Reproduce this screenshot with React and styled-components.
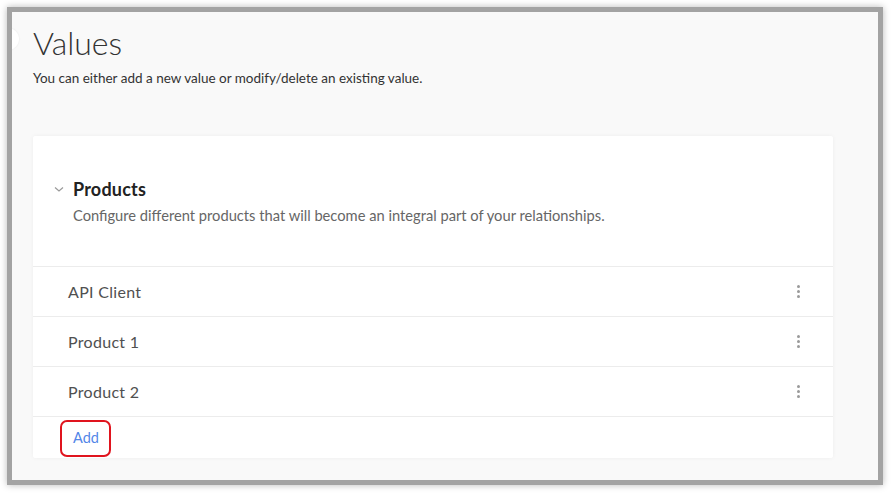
import React from 'react';
import styled, {createGlobalStyle} from 'styled-components';

const GlobalStyle = createGlobalStyle`
  html, body {
    margin: 0;
    padding: 0;
    background: #fff;
  }
  body {
    font-family: Lato, "Open Sans", "Liberation Sans", sans-serif;
  }
`;

const Page = styled.div`
  padding: 7px 8px 9px 7px;
  width: 891px;
  height: 494px;
  box-sizing: border-box;
`;

const Frame = styled.div`
  position: relative;
  overflow: hidden;
  box-sizing: border-box;
  width: 876px;
  height: 478px;
  border: 5px solid #a3a3a3;
  box-shadow: 0 0 7px rgba(0, 0, 0, 0.28);
  background: #f9f9f9;
  padding: 11px 45px 0 21px;
`;

const SideToggle = styled.span`
  position: absolute;
  left: -15px;
  top: 16px;
  width: 22px;
  height: 22px;
  border-radius: 50%;
  background: #fff;
  box-shadow: 0 0 2px rgba(0, 0, 0, 0.08);
`;

const Title = styled.h1`
  margin: 0;
  font-size: 32px;
  font-weight: 300;
  line-height: 40px;
  color: #333;
`;

const Subtitle = styled.p`
  margin: 6px 0 0;
  font-size: 13.5px;
  line-height: 18px;
  color: #333;
`;

const Card = styled.section`
  margin-top: 49px;
  width: 800px;
  background: #fff;
  border-radius: 2px;
  box-shadow: 0 0 4px rgba(0, 0, 0, 0.05);
`;

const CardHeader = styled.div`
  padding: 41px 20px 42px 20px;
  border-bottom: 1px solid #ececec;
`;

const HeaderLine = styled.div`
  display: flex;
  align-items: center;
  gap: 8px;
`;

const Chevron = styled.svg`
  width: 12px;
  height: 12px;
  flex-shrink: 0;
`;

const SectionTitle = styled.h2`
  margin: 0;
  font-size: 18px;
  font-weight: 700;
  letter-spacing: 0.2px;
  line-height: 24px;
  color: #222;
`;

const SectionText = styled.p`
  margin: 5px 0 0 20px;
  font-size: 14.7px;
  line-height: 18px;
  color: #666;
`;

const Row = styled.div`
  display: flex;
  align-items: center;
  justify-content: space-between;
  height: 49px;
  padding: 0 29px 0 35px;
  border-bottom: 1px solid #ececec;
  font-size: 16px;
  letter-spacing: 0.3px;
  color: #505050;
`;

const Kebab = styled.button`
  display: flex;
  flex-direction: column;
  align-items: center;
  gap: 2px;
  padding: 2px 4px;
  border: none;
  background: none;
  cursor: pointer;

  span {
    width: 3px;
    height: 3px;
    border-radius: 50%;
    background: #9a9a9a;
  }
`;

const AddRow = styled.div`
  display: flex;
  padding: 3px 0 1px 27px;
`;

const AddButton = styled.button`
  box-sizing: border-box;
  width: 51px;
  height: 37px;
  padding: 0 0 2px 11px;
  text-align: left;
  border: 2px solid #e0141e;
  border-radius: 7px;
  background: #fff;
  font-family: inherit;
  font-size: 14.5px;
  color: #5286e8;
  cursor: pointer;
`;

const products = ['API Client', 'Product 1', 'Product 2'];

function App() {
  return (
    <>
      <GlobalStyle />
      <Page>
        <Frame>
          <SideToggle />
          <Title>Values</Title>
          <Subtitle>You can either add a new value or modify/delete an existing value.</Subtitle>
          <Card>
            <CardHeader>
              <HeaderLine>
                <Chevron viewBox="0 0 12 12">
                  <path d="M2 4.5 L6 8 L10 4.5" fill="none" stroke="#9a9a9a" strokeWidth="1.2" />
                </Chevron>
                <SectionTitle>Products</SectionTitle>
              </HeaderLine>
              <SectionText>Configure different products that will become an integral part of your relationships.</SectionText>
            </CardHeader>
            {products.map((name) => (
              <Row key={name}>
                {name}
                <Kebab aria-label="more">
                  <span /><span /><span />
                </Kebab>
              </Row>
            ))}
            <AddRow>
              <AddButton>Add</AddButton>
            </AddRow>
          </Card>
        </Frame>
      </Page>
    </>
  );
}

export default App;
